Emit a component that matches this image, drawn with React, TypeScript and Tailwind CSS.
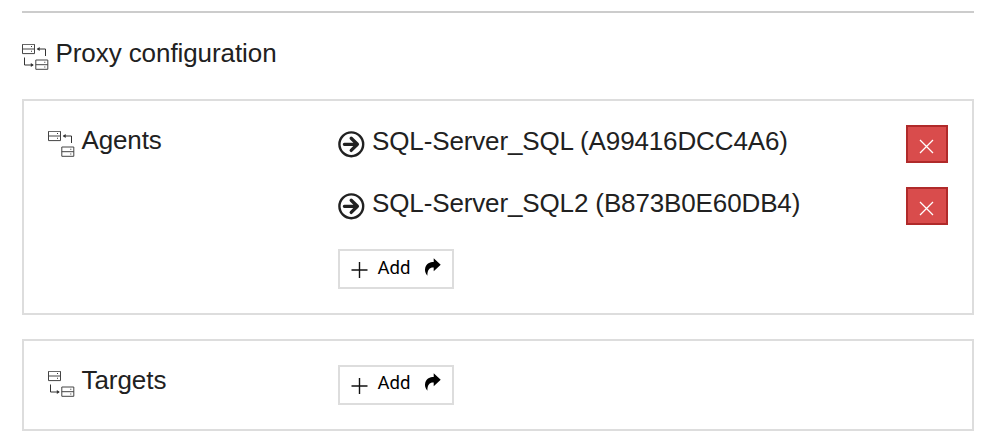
import React from "react";

const textFont = "font-['Liberation_Sans',Arial,sans-serif]";

type ProxyIconProps = { up?: boolean; down?: boolean };

function ServerBox({ x, y }: { x: number; y: number }) {
  return (
    <g transform={`translate(${x} ${y})`}>
      <path d="M.5 .5h12v9.3H.5zM.5 5.2h12" fill="none" stroke="#444" />
      <path d="M9 2.3h1v1H9zM9 7h1v1H9z" fill="#333" />
    </g>
  );
}

function ProxyIcon({ up, down }: ProxyIconProps) {
  return (
    <svg className="block h-[27px] w-[27px] shrink-0" viewBox="0 0 27 27">
      <ServerBox x={0} y={-0.2} />
      <ServerBox x={13.3} y={15.5} />
      {up && (
        <g>
          <path d="M15.5 5H23.5V12" fill="none" stroke="#333" />
          <path d="M14.7 5l3-2v4z" fill="#333" />
        </g>
      )}
      {down && (
        <g>
          <path d="M2.5 13.5V21H11" fill="none" stroke="#333" />
          <path d="M11.8 21l-3-2v4z" fill="#333" />
        </g>
      )}
    </svg>
  );
}

function AddButton({ contentTop = "pt-[1px]" }: { contentTop?: string }) {
  return (
    <button className="flex h-10 w-[116px] items-start border-2 border-[#ddd] bg-white text-black">
      <svg className="ml-[11px] mt-[10px] h-[18px] w-[17px]" viewBox="0 0 17 18">
        <path d="M8.5 1v16M.5 9h16" stroke="#111" strokeWidth="1.4" />
      </svg>
      <span className={`flex items-start ${contentTop}`}>
        <span className="ml-[9.5px] mt-[4px] w-[33.5px] whitespace-nowrap text-left font-[Roboto,sans-serif] text-[18.5px] leading-6">Add</span>
        <svg className="ml-[13px] mt-[6px] h-[18px] w-[17px]" viewBox="0 0 17 18">
          <path d="M9.7 .2L16.7 6.7L9.7 13.2V9.5C6 9.2 3.2 11.5 3.4 17.8C1.2 15.5 .5 12.5 1.3 9.6C2.5 5.3 5.8 4 9.7 3.9z" fill="#000" />
        </svg>
      </span>
    </button>
  );
}

function AgentRow({ name }: { name: string }) {
  return (
    <div className="flex h-[38px] items-start">
      <svg className="mt-[6px] h-[27px] w-[27px] shrink-0" viewBox="0 0 27 27" fill="none" stroke="#212121">
        <circle cx="13.3" cy="13.3" r="11.9" strokeWidth="2.4" />
        <path d="M6.4 13.3h13M13.2 7.2l6.2 6.1l-6.2 6.1" strokeWidth="3.3" strokeLinecap="round" strokeLinejoin="round" />
      </svg>
      <span className="ml-[7px] mt-[1px] whitespace-nowrap text-[26px] leading-[30px] tracking-[-0.13px]">{name}</span>
      <button className="ml-auto flex h-[38px] w-[42px] items-start justify-center border-2 border-[#b02a2a] bg-[#d94c4c]">
        <svg className="mr-px mt-[12px] h-[15px] w-[15px]" viewBox="0 0 15 15">
          <path d="M1 1l13 13M14 1L1 14" stroke="#fff" strokeWidth="1.3" />
        </svg>
      </button>
    </div>
  );
}

export default function App() {
  return (
    <main className={`h-[448px] w-[998px] overflow-hidden bg-white pl-[22px] pr-6 pt-[11px] text-[#212121] ${textFont}`}>
      <div className="h-[2px] bg-[#ccc]" />
      <header className="flex h-[86px] items-start pt-[25px]">
        <div className="mt-[6px]"><ProxyIcon up down /></div>
        <h1 className="ml-[6.5px] whitespace-nowrap text-[26px] leading-[30px] tracking-[-0.08px]">Proxy configuration</h1>
      </header>
      <section className="flex h-[216px] items-start border-2 border-[#ddd] pl-6 pr-6 pt-6">
        <div className="flex w-[290px] items-start">
          <div className="mt-[6px]"><ProxyIcon up /></div>
          <h2 className="ml-[6.5px] text-[26px] leading-[30px] tracking-[-0.13px]">Agents</h2>
        </div>
        <div className="flex flex-1 flex-col gap-6">
          <AgentRow name="SQL-Server_SQL (A99416DCC4A6)" />
          <AgentRow name="SQL-Server_SQL2 (B873B0E60DB4)" />
          <AddButton />
        </div>
      </section>
      <section className="mt-6 flex h-[92px] items-start border-2 border-[#ddd] px-6 pt-6">
        <div className="flex w-[290px] items-start">
          <div className="mt-[6px]"><ProxyIcon down /></div>
          <h2 className="ml-[6.5px] text-[26px] leading-[30px] tracking-[-0.06px]">Targets</h2>
        </div>
        <AddButton contentTop="pt-0" />
      </section>
    </main>
  );
}
